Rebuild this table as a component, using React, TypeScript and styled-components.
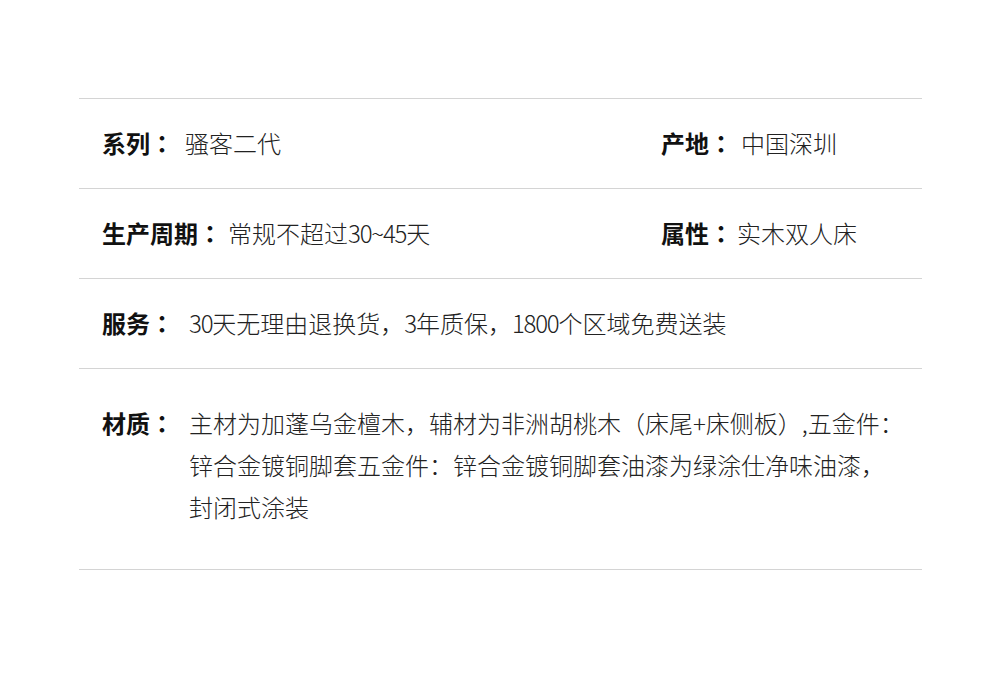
import React from "react";
import styled, { createGlobalStyle } from "styled-components";

const GlobalStyle = createGlobalStyle`
  html, body {
    margin: 0;
    padding: 0;
    background: #ffffff;
  }
  body {
    font-family: "Noto Sans CJK SC", "Noto Sans", sans-serif;
  }
`;

const Sheet = styled.div`
  margin: 98px 0 0 79px;
  width: 843px;
  border-top: 1px solid #d4d4d4;
`;

const Row = styled.div<{ $top?: number; $bottom?: number }>`
  display: grid;
  grid-template-columns: 559px 1fr;
  padding: ${(p) => p.$top ?? 23}px 0 ${(p) => p.$bottom ?? 24}px 23px;
  border-bottom: 1px solid #d4d4d4;
`;

const Field = styled.div`
  display: flex;
  align-items: flex-start;
  font-size: 24px;
  line-height: 42px;
  white-space: nowrap;
`;

const Label = styled.span`
  font-family: "Noto Sans CJK SC", sans-serif;
  font-weight: 700;
  color: #111111;
  flex: none;
`;

const Colon = styled.span`
  font-family: "Noto Sans CJK TC", sans-serif;
  font-weight: 700;
`;

const Value = styled.span<{ $gap: number }>`
  margin-left: ${(p) => p.$gap}px;
  font-weight: 300;
  color: #222222;
`;

const Num = styled.span`
  letter-spacing: -1.2px;
`;

const Line = styled.div`
  display: block;
`;

export default function App() {
  return (
    <>
      <GlobalStyle />
      <Sheet>
        <Row>
          <Field>
            <Label>
              系列<Colon>：</Colon>
            </Label>
            <Value $gap={11}>骚客二代</Value>
          </Field>
          <Field>
            <Label>
              产地<Colon>：</Colon>
            </Label>
            <Value $gap={8}>中国深圳</Value>
          </Field>
        </Row>
        <Row>
          <Field>
            <Label>
              生产周期<Colon>：</Colon>
            </Label>
            <Value $gap={6}>
              常规不超过<Num>30~45</Num>天
            </Value>
          </Field>
          <Field>
            <Label>
              属性<Colon>：</Colon>
            </Label>
            <Value $gap={4}>实木双人床</Value>
          </Field>
        </Row>
        <Row>
          <Field>
            <Label>
              服务<Colon>：</Colon>
            </Label>
            <Value $gap={15}>
              <Num>30</Num>天无理由退换货，<Num>3</Num>年质保，<Num>1800</Num>个区域免费送装
            </Value>
          </Field>
        </Row>
        <Row $top={33} $bottom={41}>
          <Field>
            <Label>
              材质<Colon>：</Colon>
            </Label>
            <Value $gap={15}>
              <Line>主材为加蓬乌金檀木，辅材为非洲胡桃木（床尾+床侧板）,五金件：</Line>
              <Line>锌合金镀铜脚套五金件：锌合金镀铜脚套油漆为绿涂仕净味油漆，</Line>
              <Line>封闭式涂装</Line>
            </Value>
          </Field>
        </Row>
      </Sheet>
    </>
  );
}
